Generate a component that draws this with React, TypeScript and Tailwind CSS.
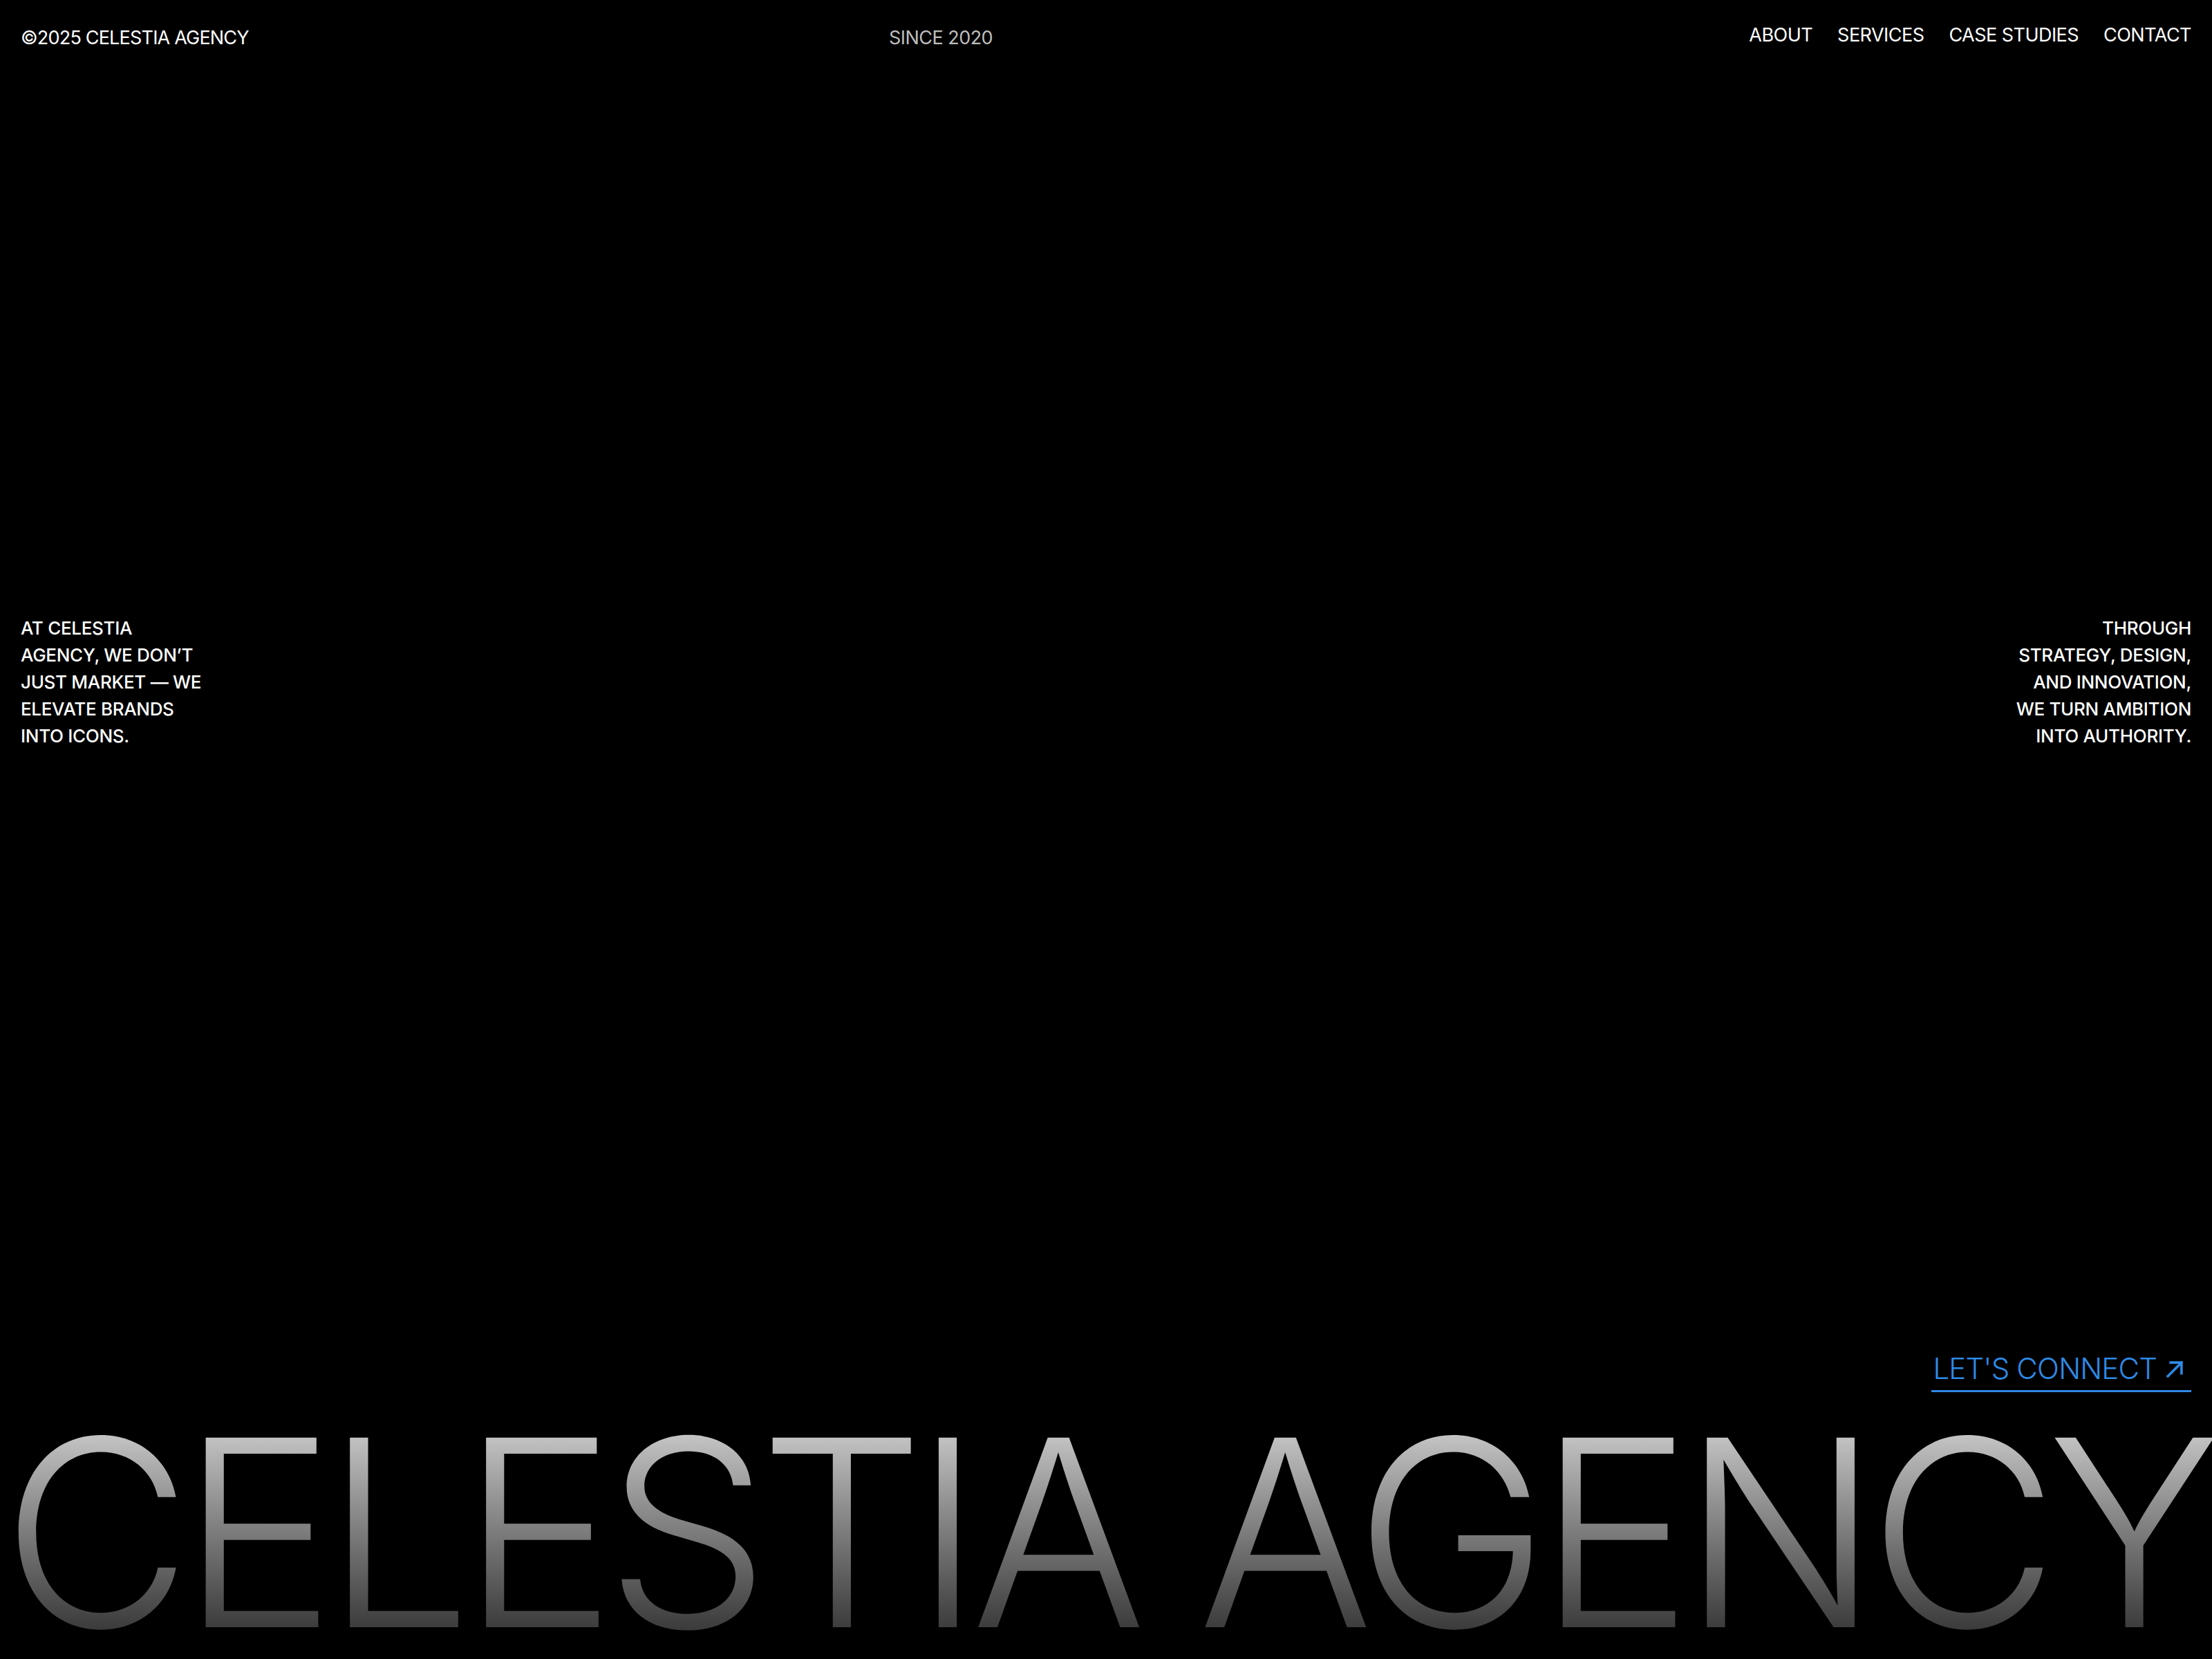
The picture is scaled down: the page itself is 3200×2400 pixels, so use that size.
import React from 'react'

const navLinks = ['ABOUT', 'SERVICES', 'CASE STUDIES', 'CONTACT']

const leftLines = ['AT CELESTIA', 'AGENCY, WE DON’T', 'JUST MARKET — WE', 'ELEVATE BRANDS', 'INTO ICONS.']
const rightLines = ['THROUGH', 'STRATEGY, DESIGN,', 'AND INNOVATION,', 'WE TURN AMBITION', 'INTO AUTHORITY.']

const ArrowIcon = () => (
  <svg width="25" height="25" viewBox="0 0 24 24" fill="none" className="shrink-0">
    <path d="M2 22 L21 3 M6 3 H21 V18" stroke="currentColor" strokeWidth="3.4" strokeLinecap="square" />
  </svg>
)

export default function App() {
  return (
    <div className="h-[2400px] w-[3200px] bg-black text-white overflow-hidden flex flex-col font-['Inter',sans-serif]">
      {/* top bar */}
      <header className="flex items-start px-[30px] pt-[35px] text-[27px] leading-[40px]">
        <div className="w-[1256px] tracking-[-0.03em]">©2025 CELESTIA AGENCY</div>
        <div className="text-[#bdbdbd] tracking-[-0.02em]">SINCE 2020</div>
        <nav className="ml-auto -mt-[4px] flex gap-[36px] tracking-[-0.02em]">
          {navLinks.map((l) => (
            <a key={l} href="#" className="text-white">
              {l}
            </a>
          ))}
        </nav>
      </header>

      {/* statements */}
      <section className="mt-[814px] flex justify-between px-[30px] text-[26px] font-medium leading-[39px] tracking-[-0.012em]">
        <p>
          {leftLines.map((l) => (
            <span key={l} className="block">
              {l}
            </span>
          ))}
        </p>
        <p className="text-right">
          {rightLines.map((l) => (
            <span key={l} className="block">
              {l}
            </span>
          ))}
        </p>
      </section>

      <div className="flex-1" />

      <div className="flex justify-end px-[30px] mb-[15px]">
        <a
          href="#"
          className="flex items-center gap-[14px] border-b-[3px] border-[#2e8ae6] pb-[10px] pl-[2px] pr-[11px] text-[42px] font-light leading-none text-[#2e8ae6] tracking-[-0.02em]"
        >
          <span>LET'S CONNECT</span>
          <ArrowIcon />
        </a>
      </div>

      <h1 className="-mb-[6px] whitespace-nowrap text-center text-[377px] font-light leading-none tracking-[-0.042em] bg-linear-to-b from-[#dddddd] to-[#272727] bg-clip-text text-transparent">
        CELESTIA AGENCY
      </h1>
    </div>
  )
}
